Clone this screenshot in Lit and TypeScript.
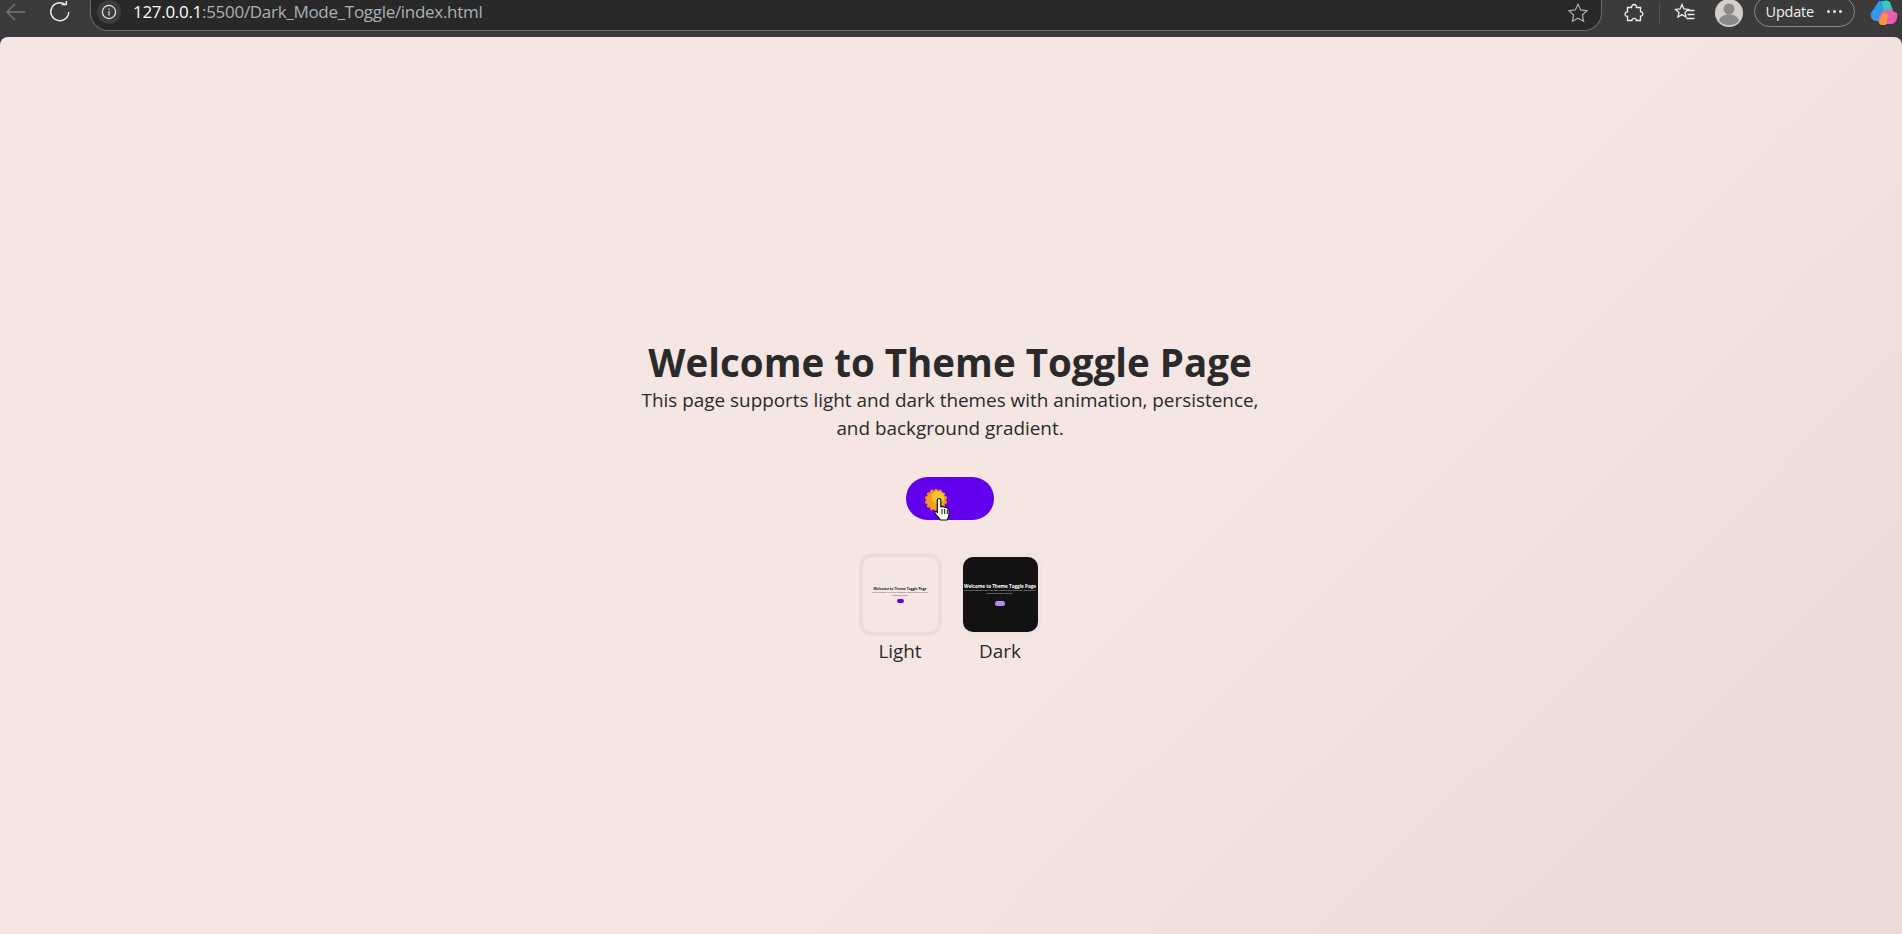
import { LitElement, html, svg, css } from 'lit';
import { customElement } from 'lit/decorators.js';

const sunBumps = Array.from({ length: 14 }, (_, i) => (i * 360) / 14);
const TITLE = 'Welcome to Theme Toggle Page';
const BLURB = 'This page supports light and dark themes with animation, persistence, and background gradient.';

@customElement('app-root')
export class AppRoot extends LitElement {
  static styles = css`
    :host {
      display: flex;
      flex-direction: column;
      height: 934px;
      overflow: hidden;
      background: #3b3b3b;
      font-family: 'Open Sans', 'Noto Sans', sans-serif;
    }

    .toolbar {
      flex: none;
      display: flex;
      align-items: flex-start;
      height: 37px;
      padding-right: 4px;
      color: #e8e8e8;
    }

    .nav {
      flex: none;
      display: block;
      margin-top: 1px;
    }

    .back {
      margin-left: 4px;
    }

    .reload {
      margin-left: 20px;
    }

    .omnibox {
      flex: 1;
      display: flex;
      align-items: center;
      height: 31px;
      margin: 0 0 0 18px;
      padding: 0 0 7px 6px;
      background: #282828;
      border: 1px solid #6a6a6a;
      border-top: none;
      border-radius: 0 0 18px 18px;
      box-sizing: border-box;
    }

    .info {
      flex: none;
      width: 24px;
      height: 24px;
      border-radius: 50%;
      background: #3d3d3d;
      display: flex;
      align-items: center;
      justify-content: center;
    }

    .url {
      margin-left: 12px;
      font-size: 17px;
      letter-spacing: -0.3px;
      color: #a9b2b8;
      white-space: nowrap;
      flex: 1;
    }

    .url b {
      font-weight: 400;
      color: #fff;
    }

    .star {
      flex: none;
      margin: 2px 12px 0 0;
    }

    .actions {
      flex: none;
      display: flex;
      align-items: center;
      height: 26px;
      margin-left: 22px;
    }

    .divider {
      width: 1px;
      height: 20px;
      background: #555;
      margin: 0 14px 0 15px;
    }

    .avatar {
      margin-left: 19px;
    }

    .update {
      display: flex;
      align-items: center;
      height: 31px;
      margin: -3px 0 0 11px;
      padding: 0 12px 0 11px;
      gap: 13px;
      box-sizing: border-box;
      border: 1px solid #8a8a8a;
      border-radius: 16px;
      font-size: 14.5px;
      color: #f0f0f0;
      letter-spacing: -0.2px;
    }

    .dots {
      display: flex;
      gap: 3px;
    }

    .dots i {
      width: 3px;
      height: 3px;
      border-radius: 50%;
      background: #eee;
    }

    .copilot {
      margin-left: 15px;
    }

    .page {
      flex: 1;
      display: flex;
      flex-direction: column;
      align-items: center;
      padding: 301px 2px 0 0;
      border-radius: 8px 8px 0 0;
      background: linear-gradient(135deg, #f5e6e3 58%, #ecdcd8 88%);
      color: #2a2a2a;
    }

    h1 {
      margin: 0;
      font-size: 38.5px;
      line-height: 48px;
      font-weight: 700;
      color: #2a2a2a;
    }

    p {
      margin: 0;
      width: 640px;
      text-align: center;
      font-size: 18.9px;
      line-height: 28px;
      color: #2a2a2a;
    }

    .toggle {
      position: relative;
      width: 88px;
      height: 43px;
      margin-top: 35px;
      border-radius: 22px;
      background: #6200ee;
    }

    .sun {
      position: absolute;
      left: 18px;
      top: 11px;
    }

    .cursor {
      position: absolute;
      left: 28px;
      top: 20px;
    }

    .themes {
      display: flex;
      gap: 17px;
      margin-top: 33px;
    }

    .theme {
      display: flex;
      flex-direction: column;
      align-items: center;
      gap: 2px;
      font-size: 18.9px;
      line-height: 26px;
    }

    .preview {
      width: 83px;
      height: 83px;
      box-sizing: border-box;
      border: 4px solid #ecdcd8;
      border-radius: 14px;
      display: flex;
      flex-direction: column;
      align-items: center;
      justify-content: center;
      background: #f5e6e3;
      overflow: hidden;
    }

    .preview.dark {
      background: #121212;
      border-color: #f1e3df;
    }

    .mini-title {
      margin-top: 1px;
      font-size: 3.4px;
      line-height: 4px;
      font-weight: 700;
      white-space: nowrap;
      color: #222;
    }

    .dark .mini-title {
      font-size: 4.6px;
      line-height: 5px;
      color: #fff;
    }

    .mini-text {
      font-size: 1.6px;
      line-height: 2.5px;
      text-align: center;
      color: #333;
      width: 56px;
    }

    .dark .mini-text {
      font-size: 2.2px;
      line-height: 3px;
      width: 74px;
      color: #ddd;
    }

    .mini-toggle {
      width: 7px;
      height: 4px;
      margin-top: 3px;
      border-radius: 2px;
      background: #6200ee;
    }

    .dark .mini-toggle {
      width: 10px;
      height: 5px;
      margin-top: 6px;
      border-radius: 3px;
      background: #b388f0;
    }
  `;

  render() {
    return html`
      <div class="toolbar">
        <svg class="nav back" width="24" height="22" viewBox="0 0 24 22" fill="none" stroke="#7a7a7a" stroke-width="1.3">
          <path d="M21 11H3M11 3l-8 8 8 8" />
        </svg>
        <svg class="nav reload" width="24" height="24" viewBox="0 0 22 22" fill="none" stroke="#eee" stroke-width="1.3">
          <path d="M16 3.5A8.2 8.2 0 1 0 19 10" />
          <path d="M12.5 3.2h4.3V-1" />
        </svg>
        <div class="omnibox">
          <span class="info">
            <svg width="16" height="16" viewBox="0 0 16 16" fill="none" stroke="#e8e8e8" stroke-width="1.2">
              <circle cx="8" cy="8" r="6.6" />
              <path d="M8 7v4.5M8 4.4v1.3" />
            </svg>
          </span>
          <span class="url"><b>127.0.0.1</b>:5500/Dark_Mode_Toggle/index.html</span>
          <svg class="star" width="22" height="22" viewBox="0 0 22 22" fill="none" stroke="#a8a8a8" stroke-width="1.3">
            <path d="M11 2.2l2.7 5.8 6.3.8-4.6 4.3 1.2 6.2L11 16.2l-5.6 3.1 1.2-6.2L2 8.8 8.3 8z" />
          </svg>
        </div>
        <div class="actions">
          <svg width="20" height="22" viewBox="0 0 20 22" fill="none" stroke="#eee" stroke-width="1.3">
            <path d="M7.5 5.5c0-4 5-4 5 0h4v4.2c3-.6 3 5 0 4.4v4.4h-4.2c.6-2.8-5-2.800-4.400 0H3.500v-4.200c-3.200.8-3.200-5 0-4.400V5.500z" />
          </svg>
          <span class="divider"></span>
          <svg width="22" height="22" viewBox="0 0 22 22" fill="none" stroke="#eee" stroke-width="1.3">
            <path d="M8 2.500l1.900 4.500 4.600.4-3.500 3 1 4.600L8 12.600 4 15l1-4.600-3.500-3 4.600-.4zM14.500 8.500h6M13.500 12.500h7M12.500 16.500h8" />
          </svg>
          <svg class="avatar" width="28" height="28" viewBox="0 0 28 28">
            <circle cx="14" cy="14" r="14" fill="#d3ceca" />
            <circle cx="14" cy="10" r="5.500" fill="#8a8a8a" />
            <path d="M4 22c1-5 5-6.500 10-6.500s9 1.500 10 6.500a14 14 0 0 1-20 0z" fill="#8a8a8a" />
          </svg>
          <span class="update">Update<span class="dots"><i></i><i></i><i></i></span></span>
          <svg class="copilot" width="28" height="28" viewBox="0 0 28 28">
            <path d="M9 2h7l-4 20H6C2 22 0 18 1 14z" fill="#2f9be8" />
            <path d="M12 3c2-2 6-2 8 0l3 9-9 2z" fill="#38c8c0" />
            <path d="M8 22l3-9 8-3 8 4c1 5-1 11-6 11H12c-2 0-3-1-4-3z" fill="#e85fb0" />
            <path d="M9 23l4-9 5 1-2 11h-4c-2 0-3-1-3-3z" fill="#f59a3c" />
          </svg>
        </div>
      </div>
      <main class="page">
        <h1>${TITLE}</h1>
        <p>${BLURB}</p>
        <div class="toggle">
          <svg class="sun" width="24" height="24" viewBox="0 0 24 24">
            ${sunBumps.map(
              (a) => svg`<circle cx="12" cy="2.500" r="1.800" fill="#f08a1a" transform="rotate(${a} 12 12)" />`
            )}
            <circle cx="12" cy="12" r="9.500" fill="#f39c1e" />
            <circle cx="14" cy="9.500" r="6.500" fill="#f7c52d" />
          </svg>
          <svg class="cursor" width="18" height="24" viewBox="0 0 18 24">
            <path
              d="M5 1.500c1 0 1.800.8 1.800 2v6l1-.2 1.500.3 1.300.5 1.400.3 1.500.6c.9.5 1.500 1 1.500 2.500v4c0 2-1 4-2 5.500H6.500C5 21 2.500 18.500 1 16c-.4-1 .4-1.800 1.300-1.500l1 .8V3.500c0-1.200.7-2 1.700-2z"
              fill="#fff"
              stroke="#111"
              stroke-width="1.200"
            />
            <path d="M8 12v5M10.700 12v5M13.300 12.500V17" stroke="#111" stroke-width="1" fill="none" />
          </svg>
        </div>
        <div class="themes">
          <div class="theme">
            <div class="preview">
              <div class="mini-title">${TITLE}</div>
              <div class="mini-text">${BLURB}</div>
              <div class="mini-toggle"></div>
            </div>
            <span>Light</span>
          </div>
          <div class="theme">
            <div class="preview dark">
              <div class="mini-title">${TITLE}</div>
              <div class="mini-text">${BLURB}</div>
              <div class="mini-toggle"></div>
            </div>
            <span>Dark</span>
          </div>
        </div>
      </main>
    `;
  }
}
